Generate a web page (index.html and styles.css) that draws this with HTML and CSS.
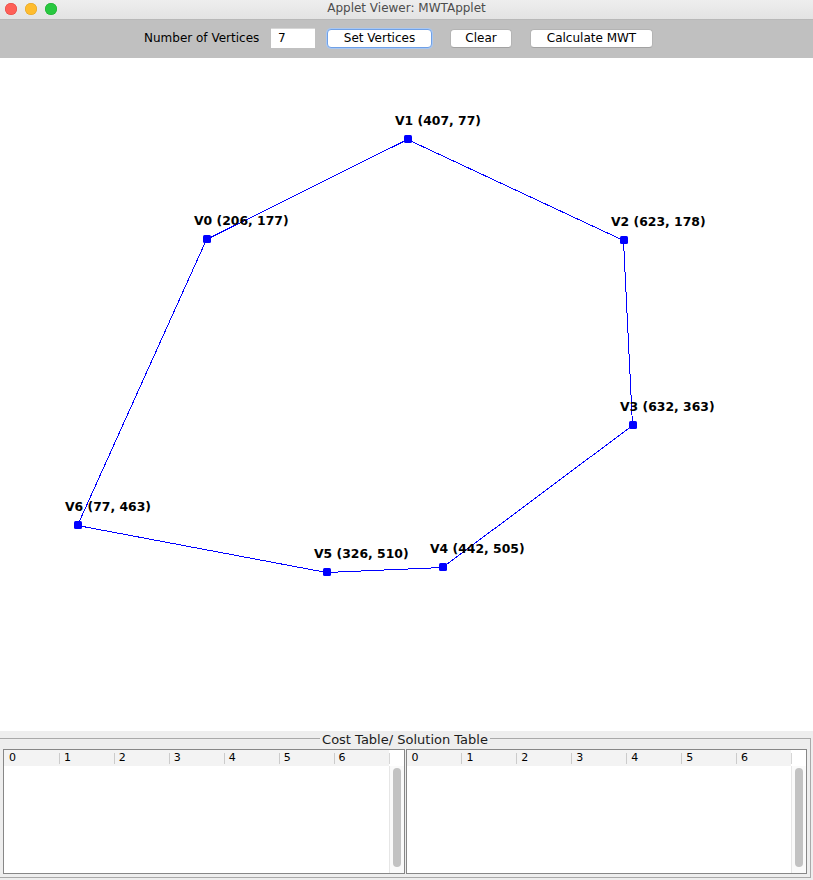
FILE: index.html
```html
<!DOCTYPE html>
<html>
<head>
<meta charset="utf-8">
<title>Applet Viewer: MWTApplet</title>
<link rel="stylesheet" href="styles.css">
</head>
<body>
<div class="window">
  <header class="titlebar">
    <div class="lights">
      <span class="light red"></span>
      <span class="light yellow"></span>
      <span class="light green"></span>
    </div>
    <div class="title">Applet Viewer: MWTApplet</div>
    <div class="spacer"></div>
  </header>

  <div class="toolbar">
    <span class="lbl">Number of Vertices</span>
    <div class="field">7</div>
    <button class="btn btn-set">Set Vertices</button>
    <button class="btn btn-clear">Clear</button>
    <button class="btn btn-calc">Calculate MWT</button>
  </div>

  <main class="canvas">
    <svg class="plot" width="813" height="673" viewBox="0 0 813 673">
      <polygon class="edges" points="206.5,181.5 407.5,81.5 623.5,182.5 632.5,367.5 442.5,509.5 326.5,514.5 77.5,467.5"/>
      <g class="dots">
        <rect x="203" y="177" width="8" height="8" rx="1.5"/>
        <rect x="404" y="77" width="8" height="8" rx="1.5"/>
        <rect x="620" y="178" width="8" height="8" rx="1.5"/>
        <rect x="629" y="363" width="8" height="8" rx="1.5"/>
        <rect x="439" y="505" width="8" height="8" rx="1.5"/>
        <rect x="323" y="510" width="8" height="8" rx="1.5"/>
        <rect x="74" y="463" width="8" height="8" rx="1.5"/>
      </g>
      <g class="labels">
        <text x="194" y="167">V0 (206, 177)</text>
        <text x="395" y="67">V1 (407, 77)</text>
        <text x="611" y="168">V2 (623, 178)</text>
        <text x="620" y="353">V3 (632, 363)</text>
        <text x="430" y="495">V4 (442, 505)</text>
        <text x="314" y="500">V5 (326, 510)</text>
        <text x="65" y="453">V6 (77, 463)</text>
      </g>
    </svg>
  </main>

  <footer class="bottom">
    <fieldset class="tables">
      <legend>Cost Table/ Solution Table</legend>
      <div class="panes">
        <div class="pane">
          <div class="thead"><span>0</span><span>1</span><span>2</span><span>3</span><span>4</span><span>5</span><span>6</span></div>
          <div class="corner"></div>
          <div class="tbody"></div>
          <div class="vscroll"><div class="thumb"></div></div>
        </div>
        <div class="pane">
          <div class="thead"><span>0</span><span>1</span><span>2</span><span>3</span><span>4</span><span>5</span><span>6</span></div>
          <div class="corner"></div>
          <div class="tbody"></div>
          <div class="vscroll"><div class="thumb"></div></div>
        </div>
      </div>
    </fieldset>
  </footer>
</div>
</body>
</html>
```

FILE: styles.css
```css
* { box-sizing: border-box; }

html, body {
  margin: 0;
  padding: 0;
}

body {
  width: 813px;
  height: 880px;
  overflow: hidden;
  background: #ffffff;
  font-family: "DejaVu Sans", "Liberation Sans", sans-serif;
  color: #000;
}

.window {
  display: flex;
  flex-direction: column;
  height: 880px;
}

/* ---------- title bar ---------- */
.titlebar {
  flex: 0 0 20px;
  display: grid;
  grid-template-columns: 1fr auto 1fr;
  align-items: center;
  padding-bottom: 2px;
  background: linear-gradient(#eeeeee, #e3e3e3);
  border-bottom: 1px solid #b8b8b8;
}

.lights {
  display: flex;
  gap: 8px;
  padding-left: 5px;
}

.light {
  width: 12px;
  height: 12px;
  border-radius: 50%;
}

.red { background: #fe5f57; box-shadow: inset 0 0 0 0.5px #e0443e; }
.yellow { background: #febc2e; box-shadow: inset 0 0 0 0.5px #dea123; }
.green { background: #28c840; box-shadow: inset 0 0 0 0.5px #1aab29; }

.title {
  font-size: 12px;
  line-height: 15px;
  color: #4d4d4d;
}

/* ---------- toolbar ---------- */
.toolbar {
  flex: 0 0 38px;
  display: flex;
  align-items: center;
  padding: 0 0 2px 144px;
  background: #c0c0c0;
}

.lbl {
  width: 119px;
  font-size: 12px;
  white-space: nowrap;
}

.field {
  width: 44px;
  height: 20px;
  margin-left: 8px;
  padding-left: 7px;
  background: #ffffff;
  font-size: 12px;
  line-height: 20px;
  box-shadow: inset 0 1px 0 #d6d6d6;
}

.btn {
  height: 19px;
  margin-left: 18px;
  padding: 0;
  background: #ffffff;
  border: 1px solid #b4b4b4;
  border-bottom-color: #a2a2a2;
  border-radius: 4px;
  font-family: "DejaVu Sans", sans-serif;
  font-size: 12px;
  line-height: 17px;
  color: #000;
}

.btn-set {
  width: 105px;
  margin-left: 12px;
  border-color: #6fa0e6;
  box-shadow: 0 0 0 1px #a9c7f1;
}

.btn-clear { width: 62px; }
.btn-calc { width: 123px; }

/* ---------- drawing canvas ---------- */
.canvas {
  flex: 0 0 673px;
  background: #ffffff;
}

.plot { display: block; }

.edges {
  fill: none;
  stroke: #0000ff;
  stroke-width: 1;
  shape-rendering: crispEdges;
}

.dots rect { fill: #0000ff; }

.labels text {
  font-family: "DejaVu Sans", sans-serif;
  font-weight: bold;
  font-size: 12.4px;
  fill: #000;
}

/* ---------- bottom tables ---------- */
.bottom {
  flex: 0 0 149px;
  background: #eeeeee;
}

.tables {
  margin: 0 2px 0 -1px;
  padding: 3px 3px 3px 3px;
  min-inline-size: 0;
  border: 1px solid #a9a9a9;
}

.tables legend {
  margin: 0 auto;
  padding: 3px 2px 0 2px;
  font-size: 13px;
  line-height: 12px;
  color: #1c1c1c;
}

.panes {
  display: grid;
  grid-template-columns: 1fr 1fr;
  gap: 1px;
}

.pane {
  height: 125px;
  display: grid;
  grid-template-columns: 1fr 15px;
  grid-template-rows: 16px 1fr;
  background: #ffffff;
  border: 1px solid #878787;
}

.thead {
  display: grid;
  grid-template-columns: repeat(7, 1fr);
  background: #f3f3f3;
}

.thead span {
  padding-left: 5px;
  font-size: 11px;
  line-height: 16px;
  background: linear-gradient(#cbcbcb, #cbcbcb) left 3px / 1px 11px no-repeat;
}

.thead span:first-child { background: none; }

.corner {
  background: linear-gradient(#d6d6d6, #d6d6d6) left 3px / 1px 11px no-repeat, #ffffff;
}

.tbody { background: #ffffff; }

.vscroll {
  display: flex;
  padding: 2px 3px 6px 3px;
  background: #fafafa;
  border-left: 1px solid #e6e6e6;
}

.thumb {
  flex: 1;
  border-radius: 4px;
  background: #c2c2c2;
}
```
